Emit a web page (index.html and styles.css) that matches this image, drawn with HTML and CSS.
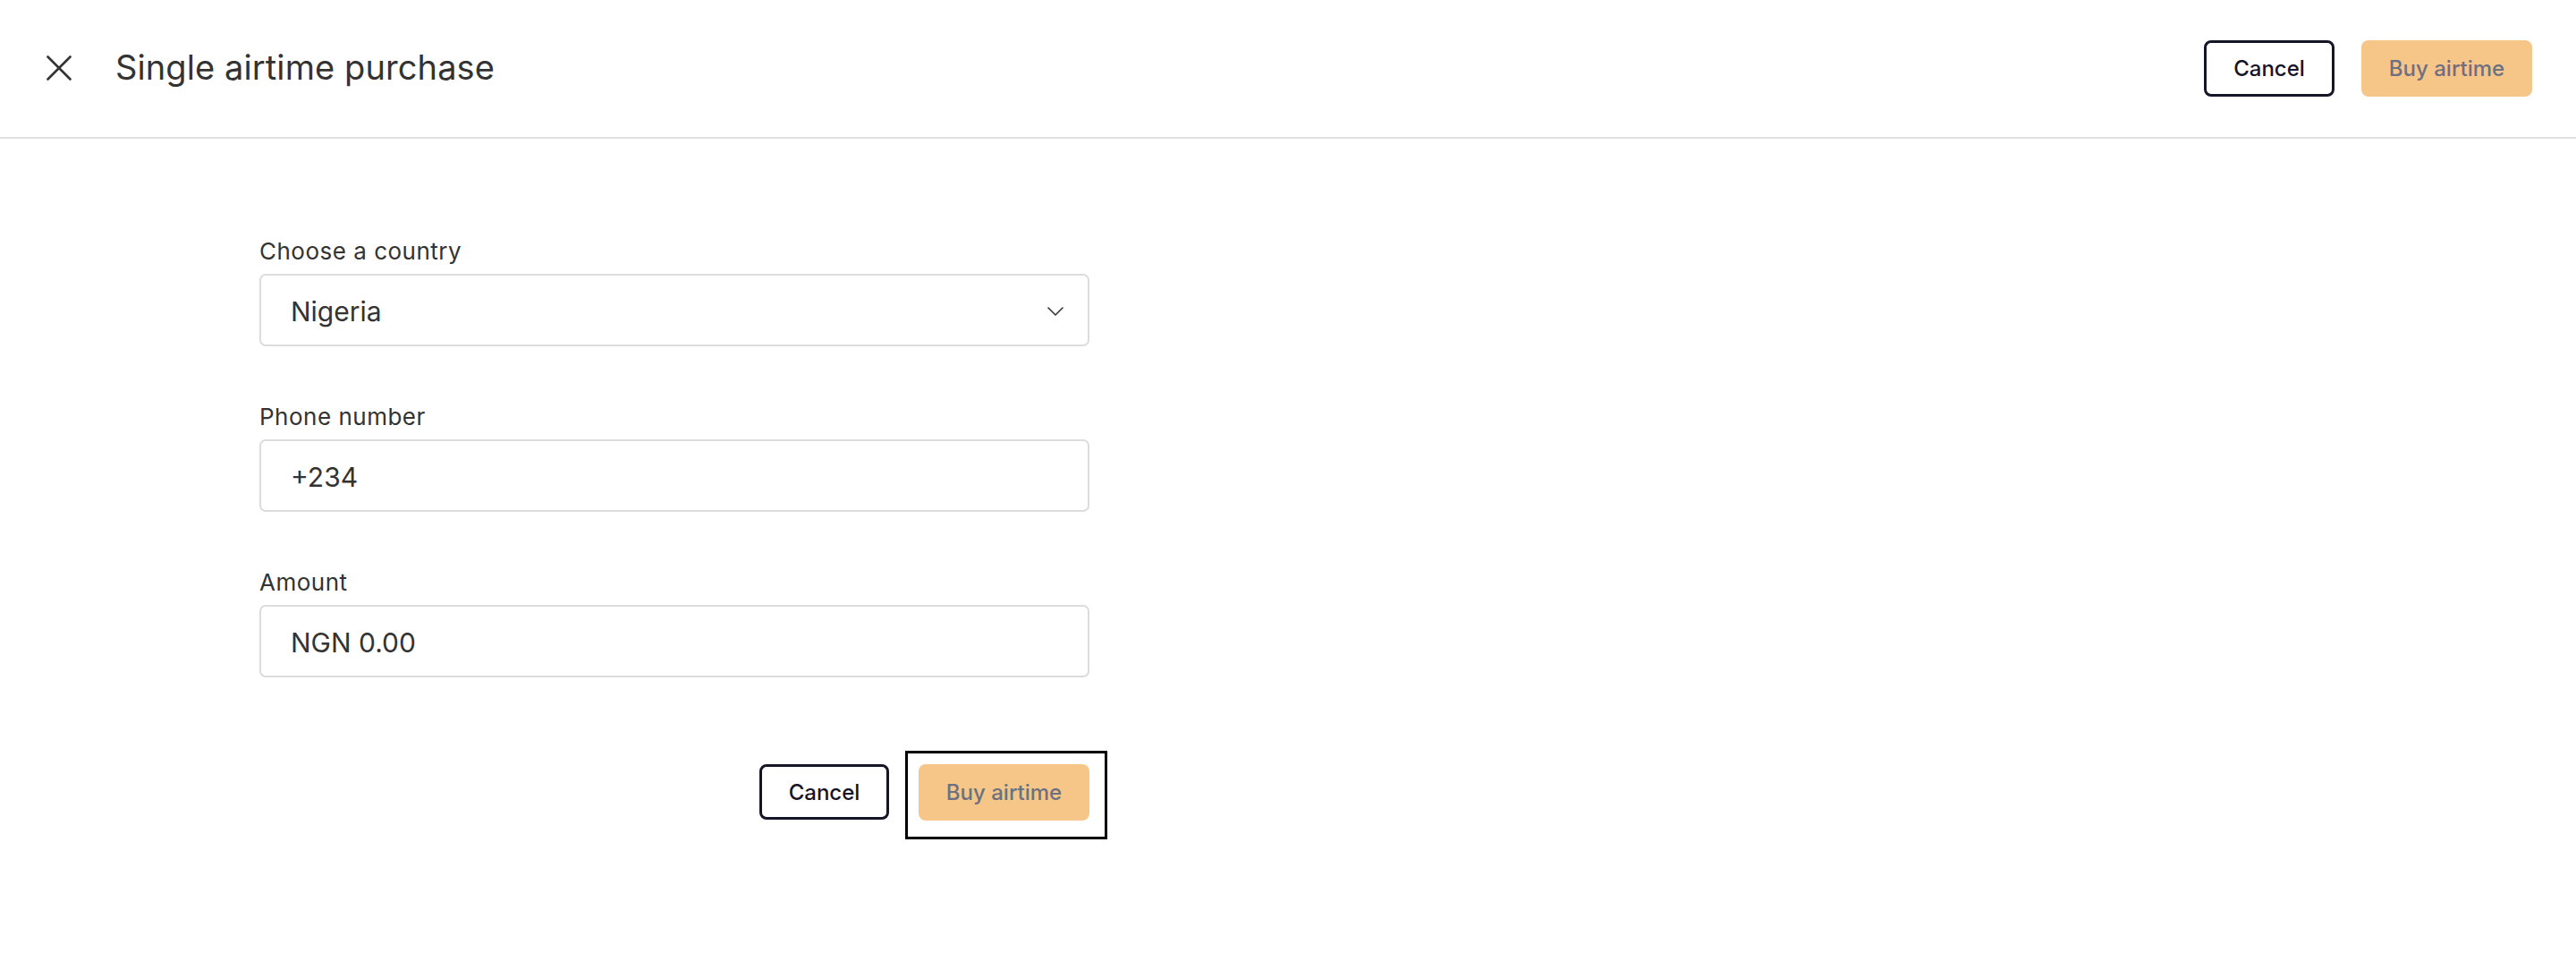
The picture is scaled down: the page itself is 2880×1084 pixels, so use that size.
FILE: index.html
```html
<!DOCTYPE html>
<html lang="en">
<head>
<meta charset="utf-8">
<title>Single airtime purchase</title>
<link rel="stylesheet" href="styles.css">
</head>
<body>
<header class="topbar">
  <button class="close" aria-label="Close">
    <svg width="28" height="28" viewBox="0 0 28 28" fill="none" stroke="#333" stroke-width="2.6" stroke-linecap="round"><path d="M1.5 1.5 L26.5 26.5 M26.5 1.5 L1.5 26.5"/></svg>
  </button>
  <h1 class="title">Single airtime purchase</h1>
  <div class="actions">
    <button class="btn btn-outline">Cancel</button>
    <button class="btn btn-primary">Buy airtime</button>
  </div>
</header>
<main class="content">
  <form class="form">
    <div class="field">
      <label class="label">Choose a country</label>
      <div class="control select">
        <span class="value">Nigeria</span>
        <svg class="chev" width="18" height="10" viewBox="0 0 18 10" fill="none" stroke="#333" stroke-width="1.6" stroke-linecap="round" stroke-linejoin="round"><path d="M1 1 L9 9 L17 1"/></svg>
      </div>
    </div>
    <div class="field">
      <label class="label">Phone number</label>
      <div class="control"><span class="value">+234</span></div>
    </div>
    <div class="field">
      <label class="label">Amount</label>
      <div class="control"><span class="value">NGN 0.00</span></div>
    </div>
    <div class="form-actions">
      <button type="button" class="btn btn-outline btn-sm">Cancel</button>
      <div class="focus-wrap">
        <button type="button" class="btn btn-primary">Buy airtime</button>
      </div>
    </div>
  </form>
</main>
</body>
</html>
```
FILE: styles.css
```css
* { box-sizing: border-box; }
html, body { margin: 0; padding: 0; background: #fff; }
body {
  font-family: Inter, "Noto Sans", sans-serif;
  color: #333;
  min-height: 100vh;
}

.topbar {
  display: flex;
  align-items: center;
  height: 155px;
  padding: 0 49px 0 52px;
  border-bottom: 2px solid #e0e0e0;
}
.close {
  display: flex;
  align-items: center;
  justify-content: center;
  width: 28px;
  height: 28px;
  padding: 0;
  border: 0;
  background: none;
  margin-bottom: 1px;
}
.title {
  margin: 0 0 4px 49px;
  font-size: 38px;
  font-weight: 400;
  color: #333;
  letter-spacing: 0.1px;
}
.actions {
  margin-left: auto;
  display: flex;
  gap: 30px;
}

.btn {
  font-family: Inter, "Noto Sans", sans-serif;
  font-size: 24px;
  font-weight: 500;
  height: 63px;
  border-radius: 8px;
  cursor: pointer;
  display: block;
}
.btn-outline {
  width: 146px;
  background: #fff;
  color: #151528;
  border: 3px solid #151528;
}
.btn-sm { width: 145px; }
.btn-primary {
  width: 191px;
  background: #f6c689;
  color: #6d7080;
  border: 0;
}

.content { padding: 110px 0 120px 290px; }
.form { width: 928px; }
.field { margin-bottom: 63px; }
.label {
  display: block;
  font-size: 26px;
  letter-spacing: 0.5px;
  line-height: 32px;
  margin-bottom: 9px;
  color: #333;
}
.control {
  display: flex;
  align-items: center;
  height: 81px;
  border: 2px solid #dcdcdc;
  border-radius: 7px;
  padding: 0 27px 0 33px;
}
.value {
  font-size: 30px;
  color: #333;
  padding-top: 2px;
}
.select { justify-content: space-between; }
.chev { margin-top: 2px; }

.form-actions {
  display: flex;
  justify-content: flex-end;
  gap: 33px;
  margin-top: 97px;
}
.form-actions .btn-outline { height: 62px; }
.focus-wrap { position: relative; }
.focus-wrap::after {
  content: "";
  position: absolute;
  top: -15px;
  left: -15px;
  right: -20px;
  bottom: -21px;
  border: 3px solid #000;
  pointer-events: none;
}
```
